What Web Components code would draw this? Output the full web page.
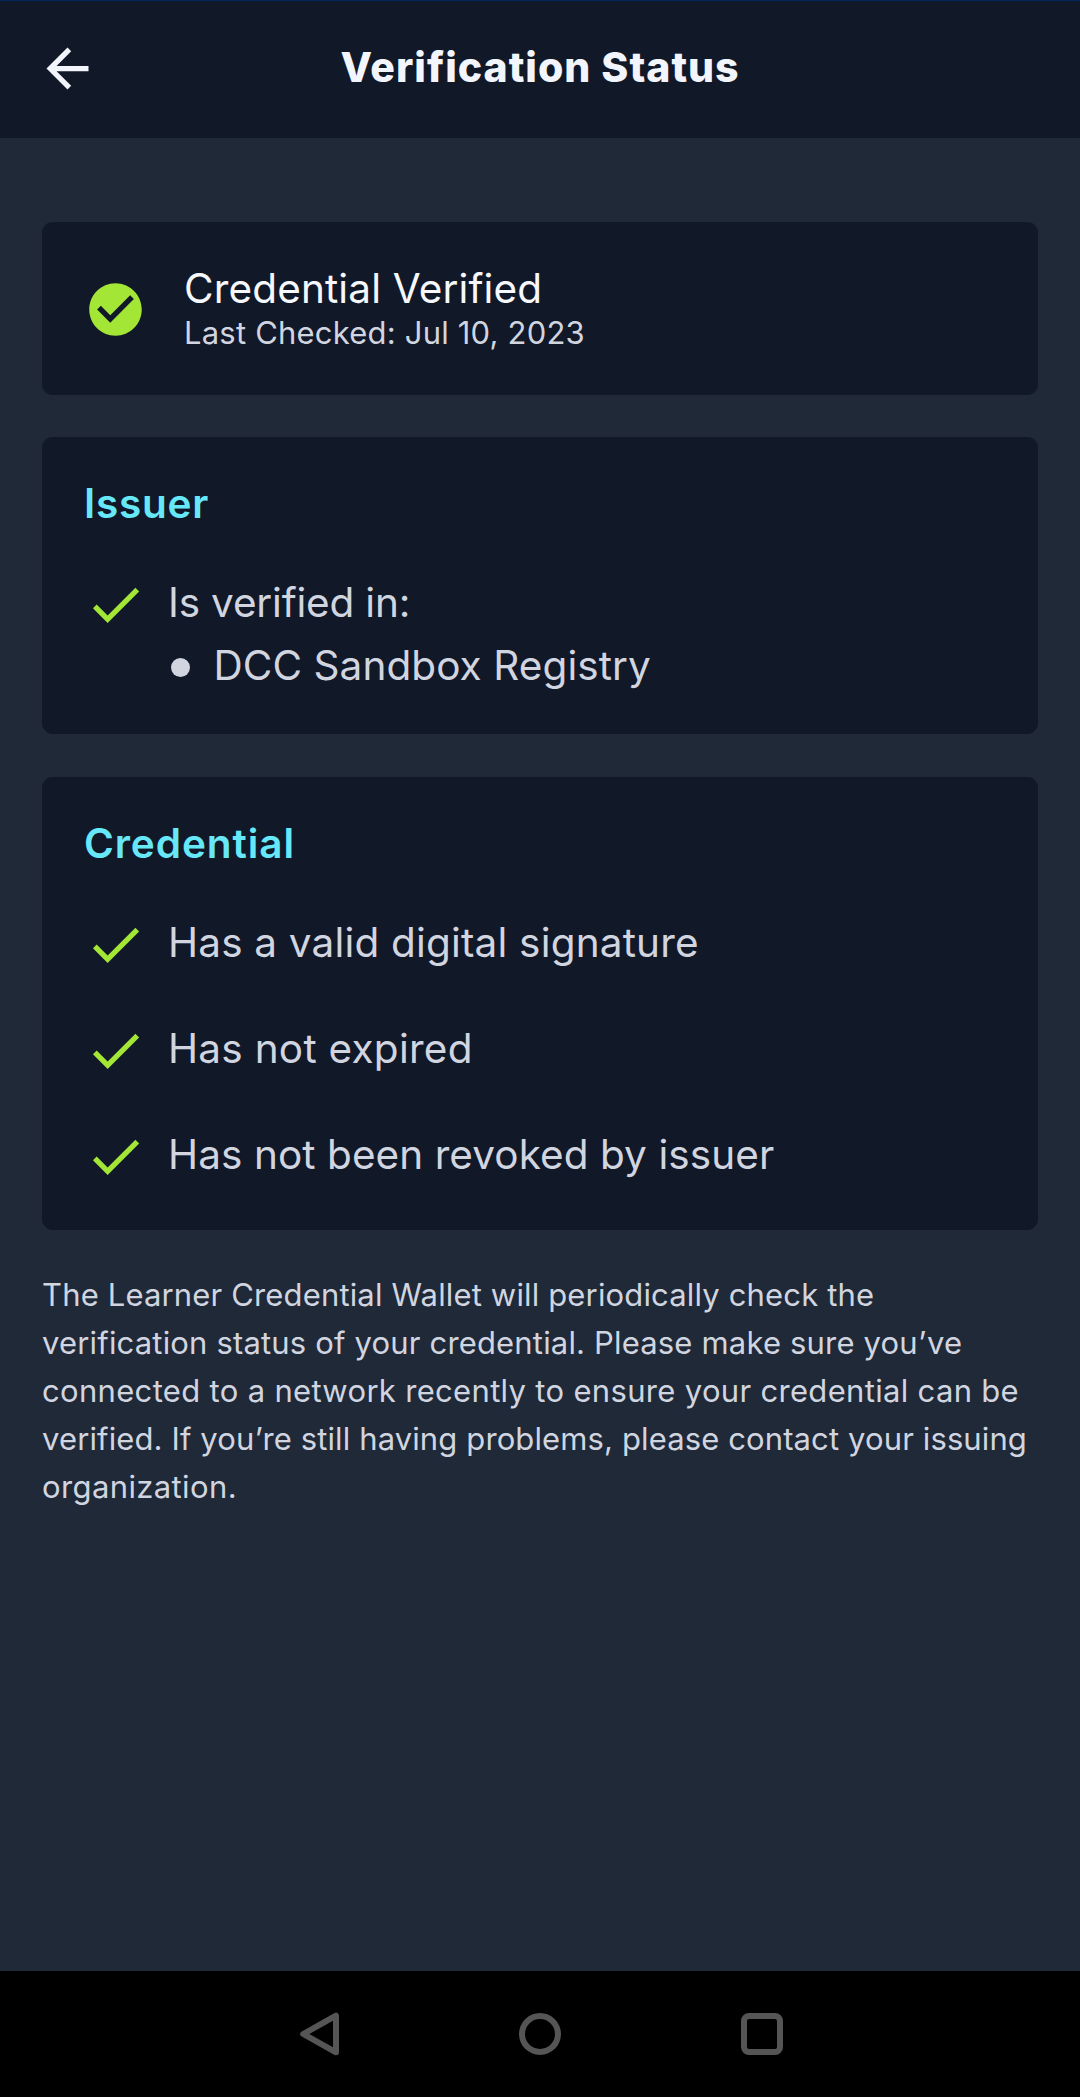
<!DOCTYPE html>
<html lang="en">
<head>
<meta charset="utf-8">
<title>Verification Status</title>
<style>
html, body { margin: 0; height: 100%; background: #1f2937; }
body { font-family: Inter, Roboto, "Liberation Sans", sans-serif; color: #d1d5e0; }
</style>
</head>
<body>
<verification-screen></verification-screen>

<script>
function define(name, markup) {
  const template = document.createElement('template');
  template.innerHTML = markup;
  customElements.define(name, class extends HTMLElement {
    constructor() {
      super();
      this.attachShadow({ mode: 'open' }).append(template.content.cloneNode(true));
    }
  });
}

define('icon-back', `
<style>:host{display:block;width:63px;height:63px}svg{display:block}</style>
<svg width="63" height="63" viewBox="0 0 24 24" fill="#f2f5fb"><path d="M20 11H7.83l5.59-5.59L12 4l-8 8 8 8 1.41-1.41L7.83 13H20v-2z"/></svg>`);

define('icon-check', `
<style>:host{display:block;width:63px;height:63px}svg{display:block}</style>
<svg width="63" height="63" viewBox="0 0 24 24" fill="#a3e635"><path d="M9 16.17 4.83 12l-1.42 1.41L9 19 21 7l-1.41-1.41z"/></svg>`);

define('icon-check-circle', `
<style>:host{display:block;width:63px;height:63px}svg{display:block}</style>
<svg width="63" height="63" viewBox="0 0 24 24" fill="#a3e635"><path d="M12 2C6.48 2 2 6.48 2 12s4.480 10 10 10 10-4.480 10-10S17.520 2 12 2zm-2 15-5-5 1.410-1.410L10 14.170l7.590-7.590L19 8l-9 9z"/></svg>`);

define('app-header', `
<style>
:host{display:grid;grid-template-columns:1fr auto 1fr;align-items:center;box-sizing:border-box;height:138px;padding:0 36px;background:#111827;border-top:1px solid #00285c}
icon-back{margin-top:-3px}
h1{margin:-4px 0 0;font-size:41px;line-height:49px;font-weight:800;letter-spacing:1px;color:#f2f5fb;white-space:nowrap}
</style>
<icon-back></icon-back><h1><slot></slot></h1>`);

define('info-card', `
<style>
:host{display:block;box-sizing:border-box;padding:42px;border-radius:11px;background:#111827}
</style>
<slot></slot>`);

define('card-heading', `
<style>
:host{display:block;margin-bottom:43px;font-size:40.5px;line-height:49px;font-weight:600;color:#67e8f9;letter-spacing:var(--tracking,0)}
</style>
<slot></slot>`);

define('status-summary', `
<style>
:host{display:flex;align-items:center;gap:37px;margin-bottom:-1.500px}
.text{display:flex;flex-direction:column;white-space:nowrap}
.title{font-size:40.5px;line-height:49px;letter-spacing:.14px;color:#f6f8fd}
.date{font-size:31px;line-height:40px;padding-bottom:1.500px;letter-spacing:.2px}
icon-check-circle{margin-top:1px}
</style>
<icon-check-circle></icon-check-circle>
<div class="text"><span class="title"><slot name="title"></slot></span><span class="date"><slot name="date"></slot></span></div>`);

define('check-item', `
<style>
:host{display:flex;gap:21px;font-size:40.5px;line-height:63px;white-space:nowrap;letter-spacing:var(--tracking,0)}
icon-check{padding-top:2px}
</style>
<icon-check></icon-check><div><slot></slot></div>`);

define('bullet-item', `
<style>
:host{display:flex;align-items:center;gap:23.5px;padding-left:3px;margin-bottom:-5px;letter-spacing:.07px}
i{width:19px;height:19px;border-radius:50%;background:#d1d5e0;margin-top:4px}
</style>
<i></i><span><slot></slot></span>`);

define('help-line', `
<style>:host{display:block;letter-spacing:var(--tracking,0)}</style>
<slot></slot>`);

define('help-note', `
<style>:host{display:block;margin-top:-2px;font-size:31px;line-height:48px;white-space:nowrap}</style>
<slot></slot>`);

define('system-nav', `
<style>
:host{display:flex;justify-content:center;align-items:center;gap:174px;height:126px;background:#000}
svg{display:block;width:48px;height:48px;fill:none;stroke:#555;stroke-width:6;stroke-linejoin:round}
</style>
<svg viewBox="0 0 48 48"><path d="M42 5.700V42.300L9.200 24Z"/></svg>
<svg viewBox="0 0 48 48"><circle cx="24" cy="24" r="18"/></svg>
<svg viewBox="0 0 48 48"><rect x="6" y="6" width="36" height="36" rx="5"/></svg>`);

define('verification-screen', `
<style>
:host{display:flex;flex-direction:column;height:2097px;width:1080px;background:#1f2937}
main{flex:1;display:flex;flex-direction:column;gap:43px;padding:84px 42px 0}
.summary{margin-bottom:-1px}
.list{display:flex;flex-direction:column;gap:41px}
</style>
<app-header>Verification Status</app-header>
<main>
<info-card class="summary"><status-summary><span slot="title">Credential Verified</span><span slot="date">Last Checked: Jul 10, 2023</span></status-summary></info-card>
<info-card>
<card-heading style="--tracking:.75px">Issuer</card-heading>
<check-item style="--tracking:-.18px">Is verified in:<bullet-item>DCC Sandbox Registry</bullet-item></check-item>
</info-card>
<info-card>
<card-heading style="--tracking:.92px">Credential</card-heading>
<div class="list">
<check-item style="--tracking:.18px">Has a valid digital signature</check-item>
<check-item style="--tracking:.26px">Has not expired</check-item>
<check-item style="--tracking:.07px">Has not been revoked by issuer</check-item>
</div>
</info-card>
<help-note>
<help-line style="--tracking:.154px">The Learner Credential Wallet will periodically check the</help-line>
<help-line style="--tracking:.17px">verification status of your credential. Please make sure you’ve</help-line>
<help-line style="--tracking:.32px">connected to a network recently to ensure your credential can be</help-line>
<help-line style="--tracking:.12px">verified. If you’re still having problems, please contact your issuing</help-line>
<help-line style="--tracking:.38px">organization.</help-line>
</help-note>
</main>
<system-nav></system-nav>`);
</script>
</body>
</html>
